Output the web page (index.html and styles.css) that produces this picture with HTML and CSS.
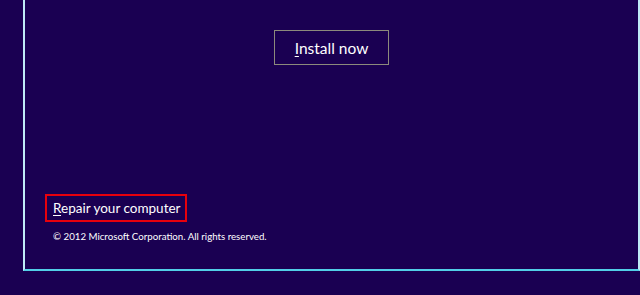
FILE: index.html
```html
<!DOCTYPE html>
<html lang="en">
  <head>
    <meta charset="UTF-8" />
    <title>Windows Setup</title>
    <link rel="stylesheet" href="styles.css">
  </head>
  <body>
    <div class="window">
      <!-- Boton principal -->
      <div class="main">
        <button class="install-button"><u>I</u>nstall now</button>
      </div>

      <!-- Pie -->
      <div class="footer">
        <a class="repair-link" href="#"><u>R</u>epair your computer</a>
        <div class="copyright">&copy; 2012 Microsoft Corporation. All rights reserved.</div>
      </div>
    </div>
  </body>
</html>
```

FILE: styles.css
```css
body {
  margin: 0;
  background: #1a0052;
  font-family: "Lato", "Noto Sans", sans-serif;
  color: #fff;
  width: 640px;
  height: 295px;
  overflow: hidden;
}

.window {
  margin-left: 23px;
  width: 613px;
  height: 269px;
  border-left: 2px solid #bfeaf6;
  border-right: 2px solid #bfeaf6;
  border-bottom: 2px solid #52cfe8;
  display: flex;
  flex-direction: column;
}

.main {
  flex: 1;
  display: flex;
  justify-content: center;
  align-items: flex-start;
  padding-top: 30px;
}

.install-button {
  width: 115px;
  height: 35px;
  background: transparent;
  border: 1px solid #8c8a7c;
  color: #fff;
  font-family: inherit;
  font-size: 15.5px;
  padding: 0;
  cursor: pointer;
}

.install-button u,
.repair-link u {
  text-decoration-thickness: 1px;
  text-underline-offset: 2px;
}

.footer {
  padding-left: 20px;
  padding-bottom: 26px;
  display: flex;
  flex-direction: column;
  align-items: flex-start;
}

.repair-link {
  display: block;
  border: 2px solid #e8000c;
  padding: 0 4px 0 6px;
  height: 24px;
  line-height: 24px;
  color: #fff;
  text-decoration: none;
  font-size: 13.5px;
}

.copyright {
  margin-top: 8px;
  margin-left: 8px;
  font-size: 9.7px;
  line-height: 13px;
}
```
